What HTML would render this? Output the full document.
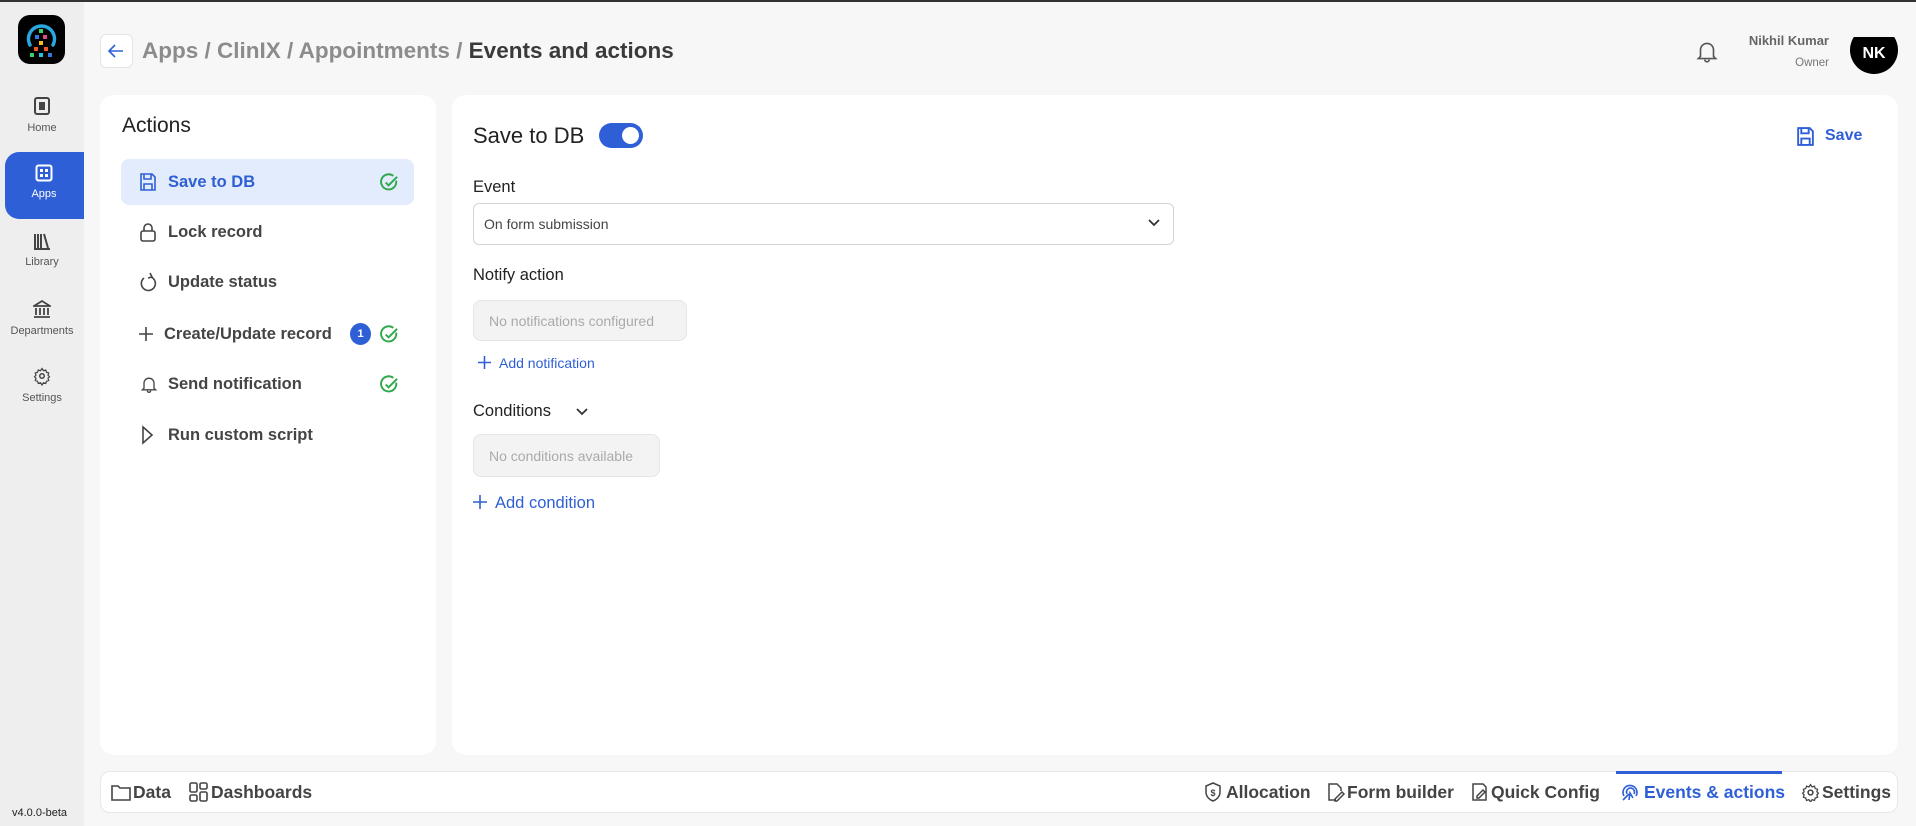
<!DOCTYPE html>
<html><head><meta charset="utf-8">
<style>
*{box-sizing:border-box;margin:0;padding:0}
body{width:1916px;height:826px;overflow:hidden;background:#f7f7f7;font-family:"Liberation Sans",sans-serif;position:relative;color:#333}
.a{position:absolute}
.side{left:0;top:0;width:84px;height:826px;background:#eeeeee}
.topline{left:0;top:0;width:1916px;height:2px;background:#333}
.nav{width:84px;text-align:center;font-size:11px;color:#555}
.nav svg{display:block;margin:0 auto 6px}
.card{background:#fff;border-radius:14px}
.item{left:121px;width:293px;height:46px;border-radius:8px;font-size:16.5px;font-weight:bold;color:#444;display:flex;align-items:center}
.item svg.ic{position:absolute;left:18px}
.item span{position:absolute;left:47px}
.chk{position:absolute;left:259px}
.blue{color:#2f5fd6}
.tab{top:771px;height:42px;display:flex;align-items:center;font-size:17.5px;font-weight:bold;color:#444}
</style></head><body>
<div class="a side"></div>
<div class="a topline"></div>
<div class="a" style="left:18px;top:15px;width:47px;height:49px;border-radius:12px;background:#000">
<svg width="47" height="49" viewBox="0 0 47 49"><path d="M12 30 A13 13 0 1 1 35 30" fill="none" stroke="#29a8e0" stroke-width="3.5" stroke-linecap="round"/>
<rect x="21" y="14" width="4" height="4" fill="#3ad06a"/><rect x="17" y="20" width="4" height="4" fill="#2f7ae0"/><rect x="25" y="20" width="4" height="4" fill="#e04a8a"/><rect x="21" y="26" width="4" height="4" fill="#f0c020"/><rect x="16" y="32" width="4" height="4" fill="#f05a28"/><rect x="26" y="32" width="4" height="4" fill="#f05a28"/><rect x="12" y="38" width="4" height="4" fill="#3ad06a"/><rect x="21" y="38" width="4" height="4" fill="#29c0e0"/><rect x="30" y="38" width="4" height="4" fill="#2f7ae0"/></svg></div>
<div class="a nav" style="top:96px"><svg width="18" height="20" viewBox="0 0 18 20"><rect x="2" y="2" width="14" height="16" rx="2" fill="none" stroke="#444" stroke-width="2"/><rect x="6" y="6" width="6" height="8" fill="#444"/></svg>Home</div>
<div class="a" style="left:5px;top:152px;width:79px;height:67px;background:#2f5fd6;border-radius:14px 0 0 14px"></div>
<div class="a nav" style="top:164px;color:#fff;left:2px"><svg width="18" height="18" viewBox="0 0 18 18"><rect x="1.5" y="1.5" width="15" height="15" rx="2" fill="none" stroke="#fff" stroke-width="2"/><rect x="5" y="5" width="3" height="3" fill="#fff"/><rect x="10" y="5" width="3" height="3" fill="#fff"/><rect x="5" y="10" width="3" height="3" fill="#fff"/><rect x="10" y="10" width="3" height="3" fill="#fff"/></svg>Apps</div>
<div class="a nav" style="top:232px"><svg width="18" height="18" viewBox="0 0 18 18"><path d="M2 2v14M5 2v14M8 2v14M11 2l4 14M1 17h16" stroke="#444" stroke-width="2"/></svg>Library</div>
<div class="a nav" style="top:299px"><svg width="18" height="20" viewBox="0 0 18 20"><path d="M1 7L9 2l8 5zM3 9v7M7 9v7M11 9v7M15 9v7M1 18h16" fill="none" stroke="#444" stroke-width="1.8"/></svg>Departments</div>
<div class="a nav" style="top:366px"><svg width="18" height="20" viewBox="0 0 24 24"><circle cx="12" cy="12" r="3" fill="none" stroke="#444" stroke-width="2"/><path d="M12 2l2 3 3-1 1 3 3 1-1 3 2 2-2 2 1 3-3 1-1 3-3-1-2 3-2-3-3 1-1-3-3-1 1-3-2-2 2-2-1-3 3-1 1-3 3 1z" fill="none" stroke="#444" stroke-width="1.6"/></svg>Settings</div>
<div class="a" style="left:12px;top:807px;font-size:11px;color:#222">v4.0.0-beta</div>

<div class="a" style="left:100px;top:34px;width:33px;height:34px;background:#fff;border:1px solid #e4e4e4;border-radius:6px"><svg width="31" height="32" viewBox="0 0 31 32"><path d="M22 16H9M14 10l-6 6 6 6" fill="none" stroke="#2f5fd6" stroke-width="1.6"/></svg></div>
<div class="a" style="left:142px;top:38px;font-size:22.5px;font-weight:bold;color:#8c8c8c;white-space:nowrap">Apps / ClinIX / Appointments / <span style="color:#3a3a3a">Events and actions</span></div>
<svg class="a" style="left:1694px;top:38px" width="26" height="26" viewBox="0 0 24 24"><path d="M6 17V11a6 6 0 0 1 12 0v6l2 2H4zM10 20a2 2 0 0 0 4 0" fill="none" stroke="#555" stroke-width="1.5"/></svg>
<div class="a" style="right:87px;top:33px;font-size:13px;font-weight:bold;color:#666">Nikhil Kumar</div>
<div class="a" style="right:87px;top:57px;font-size:11.5px;color:#777">Owner</div>
<div class="a" style="left:1850px;top:37px;width:48px;height:37px;overflow:hidden"><div style="width:48px;height:48px;border-radius:50%;background:#000;margin-top:-11px;color:#fff;font-weight:bold;font-size:16px;text-align:center;padding-top:6px;line-height:44px">NK</div></div>

<div class="a card" style="left:100px;top:95px;width:336px;height:660px"></div>
<div class="a" style="left:122px;top:114px;font-size:21px;color:#222">Actions</div>
<div class="a item blue" style="top:159px;background:#e3ecfc;color:#2f5fd6">
<svg class="ic" width="18" height="20" viewBox="0 0 18 20"><path d="M2 2h11l3 3v13H2z M5 2v5h7V2 M5 18v-6h8v6" fill="none" stroke="#2f5fd6" stroke-width="1.6"/></svg><span>Save to DB</span>
<svg class="chk" width="19" height="19" viewBox="0 0 20 20"><path d="M17 8a8 8 0 1 1-3-5" fill="none" stroke="#2ea84a" stroke-width="2"/><path d="M6 10l3 3 9-9" fill="none" stroke="#2ea84a" stroke-width="2"/></svg></div>
<div class="a item" style="top:209px"><svg class="ic" width="18" height="20" viewBox="0 0 18 20"><rect x="2" y="9" width="14" height="10" rx="2" fill="none" stroke="#444" stroke-width="1.6"/><path d="M5 9V6a4 4 0 0 1 8 0v3" fill="none" stroke="#444" stroke-width="1.6"/></svg><span>Lock record</span></div>
<div class="a item" style="top:259px"><svg class="ic" width="18" height="20" viewBox="0 0 18 20"><path d="M12 5a7 7 0 1 1-7 1M11 1l2 4-4 1" fill="none" stroke="#444" stroke-width="1.6"/></svg><span>Update status</span></div>
<div class="a item" style="top:311px"><svg class="ic" style="left:16px" width="18" height="18" viewBox="0 0 18 18"><path d="M9 2v14M2 9h14" stroke="#444" stroke-width="1.6"/></svg><span style="left:43px">Create/Update record</span>
<div style="position:absolute;left:229px;width:21px;height:22px;border-radius:50%;background:#2f5fd6;color:#fff;font-size:11px;text-align:center;line-height:22px">1</div>
<svg class="chk" width="19" height="19" viewBox="0 0 20 20"><path d="M17 8a8 8 0 1 1-3-5" fill="none" stroke="#2ea84a" stroke-width="2"/><path d="M6 10l3 3 9-9" fill="none" stroke="#2ea84a" stroke-width="2"/></svg></div>
<div class="a item" style="top:361px"><svg class="ic" width="20" height="22" viewBox="0 0 24 24"><path d="M6 17V11a6 6 0 0 1 12 0v6l2 2H4zM10 20a2 2 0 0 0 4 0" fill="none" stroke="#444" stroke-width="1.6"/></svg><span>Send notification</span>
<svg class="chk" width="19" height="19" viewBox="0 0 20 20"><path d="M17 8a8 8 0 1 1-3-5" fill="none" stroke="#2ea84a" stroke-width="2"/><path d="M6 10l3 3 9-9" fill="none" stroke="#2ea84a" stroke-width="2"/></svg></div>
<div class="a item" style="top:412px"><svg class="ic" width="18" height="20" viewBox="0 0 18 20"><path d="M4 2l9 8-9 8z" fill="none" stroke="#444" stroke-width="1.6"/></svg><span>Run custom script</span></div>

<div class="a card" style="left:452px;top:95px;width:1446px;height:660px"></div>
<div class="a" style="left:473px;top:123px;font-size:22px;color:#222">Save to DB</div>
<div class="a" style="left:599px;top:123px;width:44px;height:25px;border-radius:13px;background:#2f5fd6"><div style="position:absolute;right:4px;top:4px;width:17px;height:17px;border-radius:50%;background:#fff"></div></div>
<svg class="a" style="left:1796px;top:126px" width="19" height="21" viewBox="0 0 18 20"><path d="M2 2h11l3 3v13H2z M5 2v5h7V2 M5 18v-6h8v6" fill="none" stroke="#2f5fd6" stroke-width="1.8"/></svg>
<div class="a blue" style="left:1825px;top:127px;font-size:16px;font-weight:bold">Save</div>
<div class="a" style="left:473px;top:178px;font-size:16.5px;color:#222">Event</div>
<div class="a" style="left:473px;top:203px;width:701px;height:42px;border:1px solid #d4d4d4;border-radius:6px;font-size:14px;color:#444;padding:12px 0 0 10px">On form submission
<svg style="position:absolute;right:12px;top:14px" width="14" height="10" viewBox="0 0 14 10"><path d="M2 2l5 5 5-5" fill="none" stroke="#333" stroke-width="1.8"/></svg></div>
<div class="a" style="left:473px;top:266px;font-size:16.5px;color:#222">Notify action</div>
<div class="a" style="left:473px;top:300px;width:214px;height:41px;background:#f3f3f3;border:1px solid #e6e6e6;border-radius:8px;font-size:14px;color:#aaa;padding:12px 0 0 15px">No notifications configured</div>
<svg class="a" style="left:477px;top:355px" width="15" height="15" viewBox="0 0 15 15"><path d="M7.5 1v13M1 7.5h13" stroke="#2f5fd6" stroke-width="1.6"/></svg>
<div class="a blue" style="left:499px;top:355px;font-size:14px">Add notification</div>
<div class="a" style="left:473px;top:402px;font-size:16.5px;color:#222">Conditions</div>
<svg class="a" style="left:575px;top:407px" width="14" height="10" viewBox="0 0 14 10"><path d="M2 2l5 5 5-5" fill="none" stroke="#333" stroke-width="1.8"/></svg>
<div class="a" style="left:473px;top:434px;width:187px;height:43px;background:#f3f3f3;border:1px solid #e6e6e6;border-radius:8px;font-size:14px;color:#aaa;padding:13px 0 0 15px">No conditions available</div>
<svg class="a" style="left:472px;top:494px" width="16" height="16" viewBox="0 0 16 16"><path d="M8 1v14M1 8h14" stroke="#2f5fd6" stroke-width="1.6"/></svg>
<div class="a blue" style="left:495px;top:494px;font-size:16.5px">Add condition</div>

<div class="a" style="left:100px;top:771px;width:1798px;height:42px;background:#fff;border:1px solid #e8e8e8;border-radius:10px"></div>
<div class="a" style="left:1616px;top:771px;width:166px;height:3px;background:#2f5fd6"></div>
<div class="a tab" style="left:111px"><svg width="20" height="18" viewBox="0 0 20 18"><path d="M1 3h6l2 2h10v12H1z" fill="none" stroke="#444" stroke-width="1.6"/></svg><span style="margin-left:2px">Data</span></div>
<div class="a tab" style="left:189px"><svg width="20" height="20" viewBox="0 0 20 20"><rect x="1" y="1" width="7" height="9" rx="1.5" fill="none" stroke="#444" stroke-width="1.6"/><rect x="1" y="13" width="7" height="6" rx="1.5" fill="none" stroke="#444" stroke-width="1.6"/><rect x="11" y="1" width="7" height="6" rx="1.5" fill="none" stroke="#444" stroke-width="1.6"/><rect x="11" y="10" width="7" height="9" rx="1.5" fill="none" stroke="#444" stroke-width="1.6"/></svg><span style="margin-left:2px">Dashboards</span></div>
<div class="a tab" style="left:1204px"><svg width="18" height="20" viewBox="0 0 18 20"><path d="M9 1l7 3v6c0 5-4 8-7 9-3-1-7-4-7-9V4z" fill="none" stroke="#444" stroke-width="1.5"/><text x="9" y="14" font-size="9" text-anchor="middle" fill="#444" font-family="Liberation Sans">$</text></svg><span style="margin-left:4px">Allocation</span></div>
<div class="a tab" style="left:1326px"><svg width="20" height="20" viewBox="0 0 20 20"><path d="M10 18H3V2h8l4 4v3M9 17l7-7 2 2-7 7H9z" fill="none" stroke="#444" stroke-width="1.5"/></svg><span style="margin-left:1px">Form builder</span></div>
<div class="a tab" style="left:1470px"><svg width="20" height="20" viewBox="0 0 20 20"><path d="M3 2h10l3 3v13H3zM7 14l6-6 2 2-6 6H7z" fill="none" stroke="#444" stroke-width="1.5"/></svg><span style="margin-left:1px">Quick Config</span></div>
<div class="a tab blue" style="left:1620px;color:#2f5fd6"><svg width="20" height="20" viewBox="0 0 20 20"><path d="M4 14a7 7 0 1 1 12 0M7 12a4 4 0 1 1 7 0M9 18l1-7 3 5M3 18l6-6" fill="none" stroke="#2f5fd6" stroke-width="1.6"/></svg><span style="margin-left:4px">Events &amp; actions</span></div>
<div class="a tab" style="left:1801px"><svg width="19" height="19" viewBox="0 0 24 24"><circle cx="12" cy="12" r="3" fill="none" stroke="#444" stroke-width="2"/><path d="M12 2l2 3 3-1 1 3 3 1-1 3 2 2-2 2 1 3-3 1-1 3-3-1-2 3-2-3-3 1-1-3-3-1 1-3-2-2 2-2-1-3 3-1 1-3 3 1z" fill="none" stroke="#444" stroke-width="1.6"/></svg><span style="margin-left:2px">Settings</span></div>
</body></html>
